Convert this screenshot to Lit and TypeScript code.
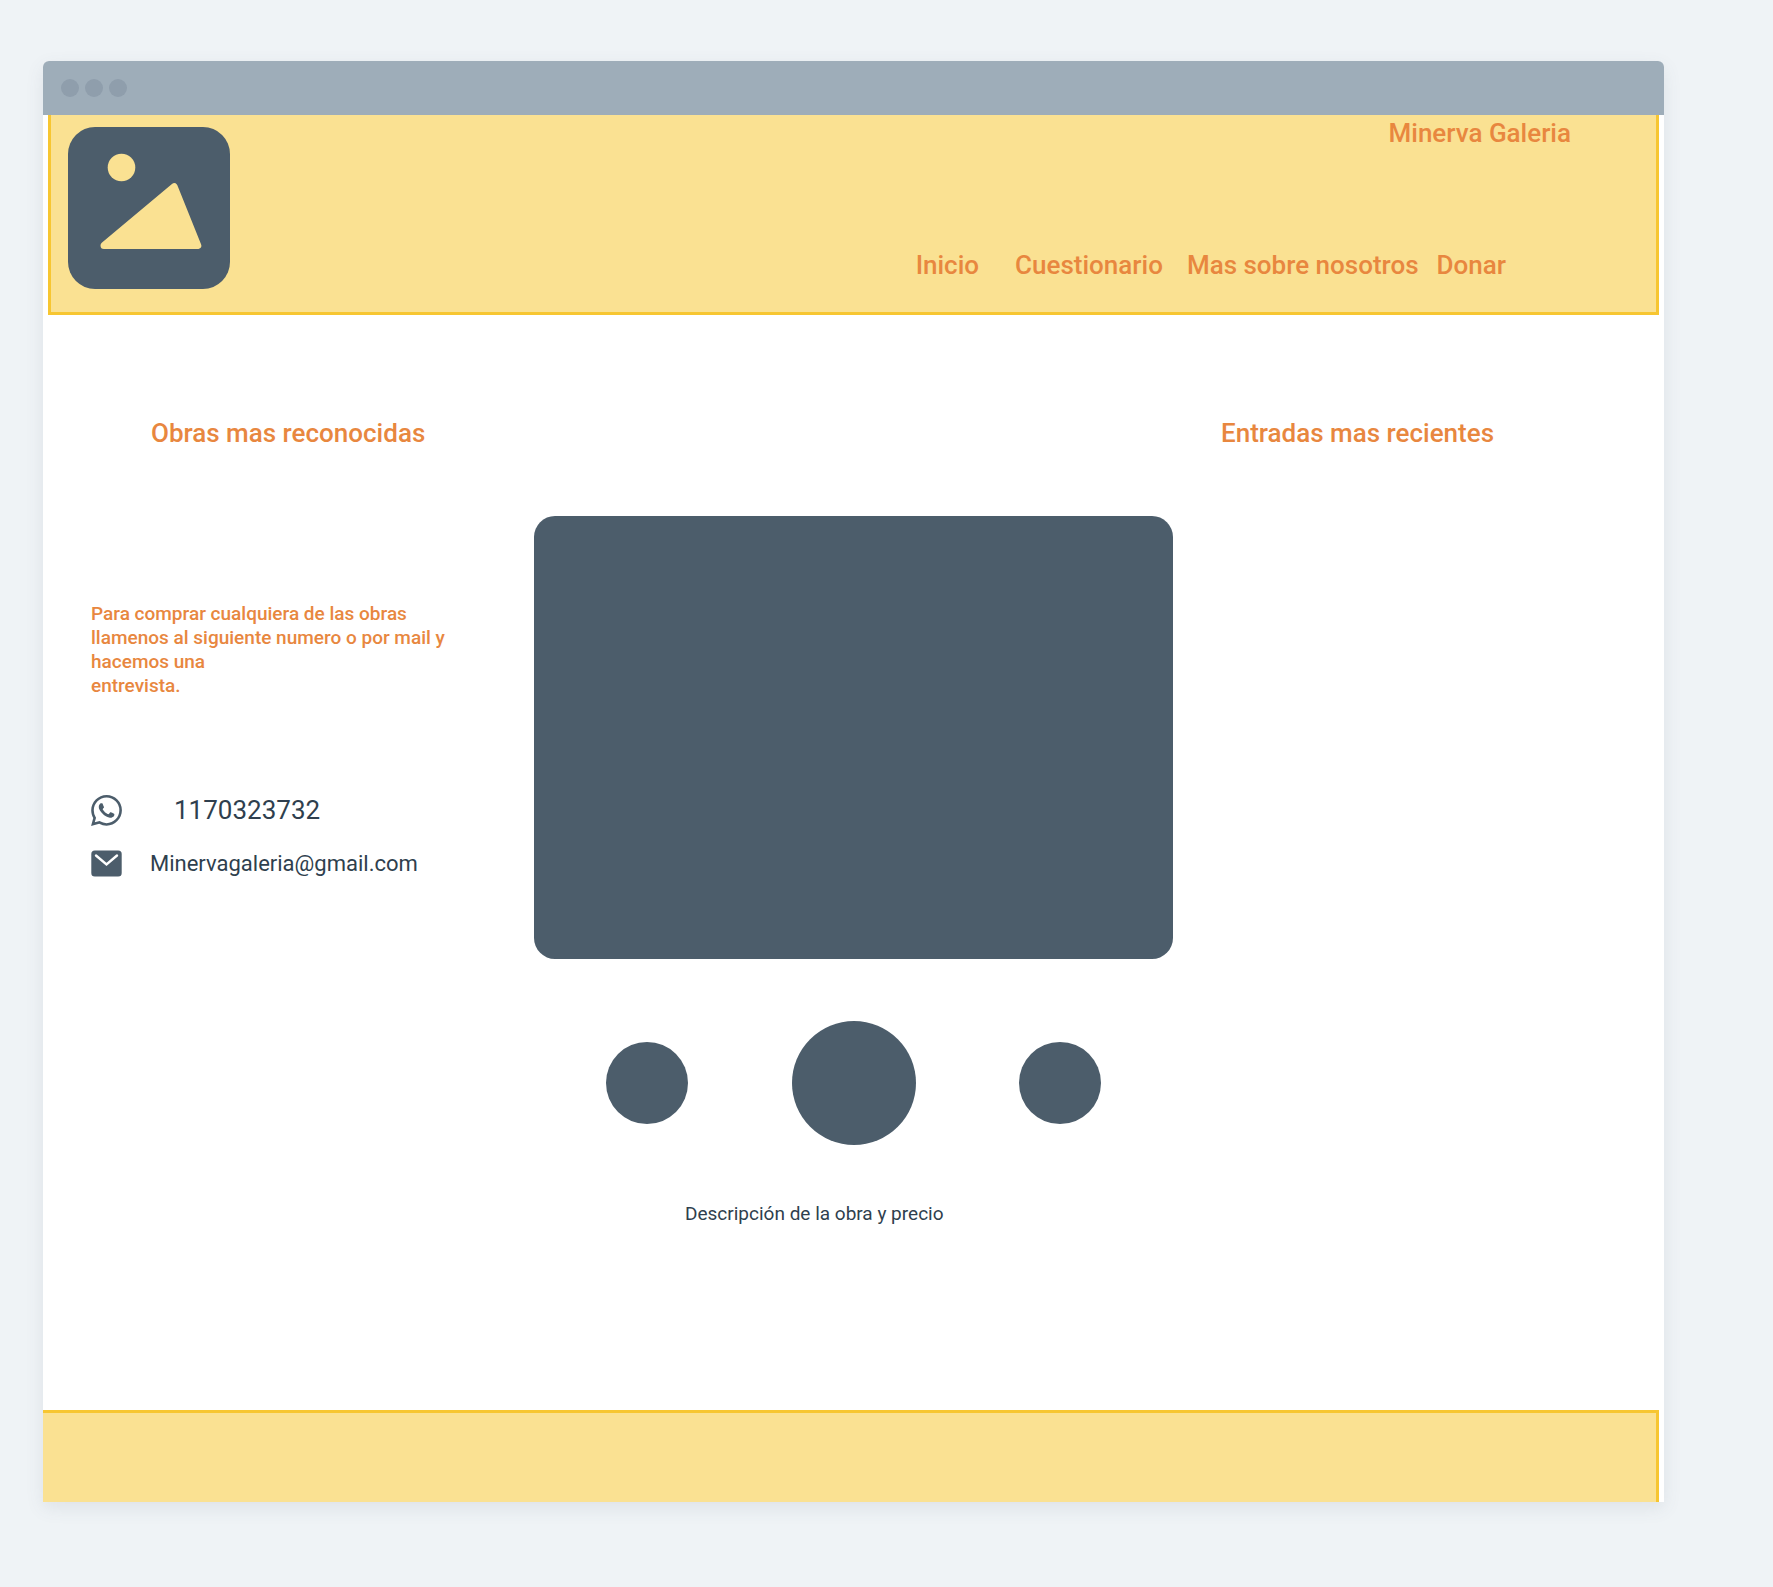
import { LitElement, html, css } from "lit";
import { customElement, property } from "lit/decorators.js";

const NAV = [
  { label: "Inicio", href: "#inicio", cls: "inicio" },
  { label: "Cuestionario", href: "#cuestionario", cls: "cuestionario" },
  { label: "Mas sobre nosotros", href: "#nosotros", cls: "nosotros" },
  { label: "Donar", href: "#donar", cls: "donar" },
];

const WORKS = ["small", "large", "small"];

@customElement("window-bar")
class WindowBar extends LitElement {
  static styles = css`
    :host {
      display: flex;
      align-items: center;
      gap: 6px;
      height: 54px;
      padding: 0 18px;
      box-sizing: border-box;
      background: #9eadb9;
      border-radius: 6px 6px 0 0;
    }
    .dot {
      width: 18px;
      height: 18px;
      border-radius: 50%;
      background: #8f9eac;
    }
  `;
  render() {
    return html`<span class="dot"></span><span class="dot"></span><span class="dot"></span>`;
  }
}

@customElement("site-header")
class SiteHeader extends LitElement {
  static styles = css`
    :host {
      display: block;
    }
    .header {
      display: flex;
      justify-content: space-between;
      margin: 0 5px;
      padding: 12px 0 23px 17px;
      background: #fae192;
      border: 3px solid #f7c631;
      border-top: 0;
    }
    .logo {
      display: block;
      width: 162px;
      height: 162px;
    }
    .side {
      display: flex;
      flex-direction: column;
      align-items: flex-end;
      gap: 100px;
      margin-top: -10px;
    }
    .title {
      margin: 0 85px 0 0;
      font-size: 26px;
      font-weight: 500;
      line-height: 32px;
    }
    .nav {
      display: flex;
      margin-right: 150px;
      font-size: 26px;
      font-weight: 500;
      line-height: 32px;
    }
    .nav a {
      color: inherit;
      text-decoration: none;
    }
    .cuestionario {
      margin-left: 36px;
    }
    .nosotros {
      margin-left: 24px;
    }
    .donar {
      margin-left: 18px;
    }
  `;
  render() {
    return html`
      <header class="header">
        <svg class="logo" viewBox="0 0 162 162" aria-hidden="true">
          <rect width="162" height="162" rx="27" fill="#4c5d6b" />
          <circle cx="53.500" cy="40.500" r="13.800" fill="#fae192" />
          <path
            d="M36 118.500 L106.200 59.800 L129.800 118.500 Z"
            fill="#fae192"
            stroke="#fae192"
            stroke-width="7"
            stroke-linejoin="round"
          />
        </svg>
        <div class="side">
          <h1 class="title">Minerva Galeria</h1>
          <nav class="nav">
            ${NAV.map((n) => html`<a class=${n.cls} href=${n.href}>${n.label}</a>`)}
          </nav>
        </div>
      </header>
    `;
  }
}

@customElement("contact-panel")
class ContactPanel extends LitElement {
  static styles = css`
    :host {
      display: block;
    }
    .note {
      margin: 0;
      font-size: 19px;
      font-weight: 500;
      line-height: 24px;
    }
    .list {
      display: grid;
      gap: 22px;
      margin: 96px 0 0;
      padding: 0;
      list-style: none;
      color: #2f3f4e;
    }
    .row {
      display: flex;
      align-items: center;
      line-height: 32px;
    }
    .row svg {
      flex: none;
      width: 31px;
      height: 31px;
    }
    .row a {
      color: inherit;
      text-decoration: none;
    }
    .phone {
      margin-left: 52px;
      font-size: 26px;
    }
    .mail {
      margin-left: 28px;
      font-size: 22px;
    }
  `;
  render() {
    return html`
      <p class="note">
        Para comprar cualquiera de las obras<br />llamenos al siguiente numero o por mail y<br />hacemos una<br />entrevista.
      </p>
      <ul class="list">
        <li class="row">
          <svg viewBox="0 0 24 24" fill="#4c5d6b" aria-hidden="true">
            <path
              d="M17.472 14.382c-.297-.149-1.758-.867-2.030-.967-.273-.099-.471-.148-.670.150-.197.297-.767.966-.940 1.164-.173.199-.347.223-.644.075-.297-.150-1.255-.463-2.390-1.475-.883-.788-1.480-1.761-1.653-2.059-.173-.297-.018-.458.130-.606.134-.133.298-.347.446-.520.149-.174.198-.298.298-.497.099-.198.050-.371-.025-.520-.075-.149-.669-1.612-.916-2.207-.242-.579-.487-.500-.669-.510-.173-.008-.371-.010-.570-.010-.198 0-.520.074-.792.372-.272.297-1.040 1.016-1.040 2.479 0 1.462 1.065 2.875 1.213 3.074.149.198 2.096 3.200 5.077 4.487.709.306 1.262.489 1.694.625.712.227 1.360.195 1.871.118.571-.085 1.758-.719 2.006-1.413.248-.694.248-1.289.173-1.413-.074-.124-.272-.198-.570-.347m-5.421 7.403h-.004a9.870 9.870 0 01-5.031-1.378l-.361-.214-3.741.982.998-3.648-.235-.374a9.860 9.860 0 01-1.510-5.260c.001-5.450 4.436-9.884 9.888-9.884 2.640 0 5.122 1.030 6.988 2.898a9.825 9.825 0 012.893 6.994c-.003 5.450-4.437 9.884-9.885 9.884m8.413-18.297A11.815 11.815 0 0012.050 0C5.495 0 .160 5.335.157 11.892c0 2.096.547 4.142 1.588 5.945L.057 24l6.305-1.654a11.882 11.882 0 005.683 1.448h.005c6.554 0 11.890-5.335 11.893-11.893a11.821 11.821 0 00-3.480-8.413z"
            />
          </svg>
          <a class="phone" href="tel:1170323732">1170323732</a>
        </li>
        <li class="row">
          <svg viewBox="0 0 31 31" aria-hidden="true">
            <rect x="0.300" y="1.500" width="30.400" height="26" rx="3.500" fill="#4c5d6b" />
            <path
              d="M5 6.500 L15.500 15.500 L26 6.500"
              fill="none"
              stroke="#fff"
              stroke-width="2.400"
              stroke-linecap="round"
            />
          </svg>
          <a class="mail" href="mailto:Minervagaleria@gmail.com">Minervagaleria@gmail.com</a>
        </li>
      </ul>
    `;
  }
}

@customElement("work-gallery")
class WorkGallery extends LitElement {
  @property({ type: Number }) selected = 1;

  static styles = css`
    :host {
      display: block;
    }
    .stage {
      aspect-ratio: 639 / 443;
      border-radius: 21px;
      background: #4c5d6b;
    }
    .thumbs {
      display: flex;
      justify-content: space-between;
      align-items: center;
      margin-top: 62px;
      padding: 0 72px;
    }
    .thumb {
      padding: 0;
      border: 0;
      border-radius: 50%;
      background: #4c5d6b;
      cursor: pointer;
    }
    .small {
      width: 82px;
      height: 82px;
    }
    .large {
      width: 124px;
      height: 124px;
    }
    .caption {
      margin: 57px 0 0 151px;
      font-size: 19px;
      line-height: 24px;
      color: #2f3f4e;
    }
  `;
  render() {
    return html`
      <div class="stage"></div>
      <div class="thumbs">
        ${WORKS.map(
          (size, i) => html`<button
            class="thumb ${size}"
            type="button"
            aria-label="Obra ${i + 1}"
            @click=${() => (this.selected = i)}
          ></button>`
        )}
      </div>
      <p class="caption">Descripción de la obra y precio</p>
    `;
  }
}

@customElement("app-root")
class AppRoot extends LitElement {
  static styles = css`
    :host {
      display: block;
      box-sizing: border-box;
      min-height: 100vh;
      padding: 61px 109px 85px 43px;
      background: #eff3f6;
      color: #e8873f;
      font-family: Roboto, "Liberation Sans", sans-serif;
    }
    .window {
      background: #fff;
      border-radius: 6px 6px 0 0;
      box-shadow: 0 6px 18px rgba(76, 93, 107, 0.1);
    }
    .content {
      display: grid;
      grid-template-columns: 491fr 639fr 491fr;
      padding-bottom: 184px;
    }
    .column {
      padding: 102px 0 0 48px;
    }
    .heading {
      margin: 0;
      font-size: 26px;
      font-weight: 500;
      line-height: 32px;
    }
    .indented {
      margin-left: 60px;
    }
    .contact {
      margin-top: 153px;
    }
    .gallery {
      padding-top: 201px;
    }
    .footer {
      height: 89px;
      margin-right: 5px;
      background: #fae192;
      border-top: 3px solid #f7c631;
      border-right: 3px solid #f7c631;
    }
  `;
  render() {
    return html`
      <div class="window">
        <window-bar></window-bar>
        <site-header></site-header>
        <main class="content">
          <section class="column">
            <h2 class="heading indented">Obras mas reconocidas</h2>
            <contact-panel class="contact"></contact-panel>
          </section>
          <work-gallery class="gallery"></work-gallery>
          <section class="column">
            <h2 class="heading">Entradas mas recientes</h2>
          </section>
        </main>
        <footer class="footer"></footer>
      </div>
    `;
  }
}
